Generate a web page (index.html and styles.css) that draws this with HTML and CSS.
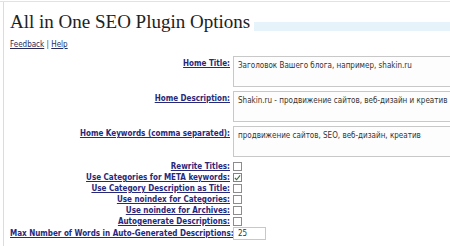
FILE: index.html
```html
<!DOCTYPE html>
<html lang="ru">
<head>
    <meta charset="UTF-8">
    <title>All in One SEO Plugin Options</title>
    <link rel="stylesheet" href="styles.css">
</head>
<body>
    <div class="topline"></div>
    <div class="wrap">
        <h1 class="title">All in One SEO Plugin Options</h1>
        <p class="links"><a href="#">Feedback</a> | <a href="#">Help</a></p>

        <div class="form">
            <a class="label tall" href="#">Home Title:</a>
            <div class="field"><div class="area">Заголовок Вашего блога, например, shakin.ru</div></div>

            <a class="label tall" href="#">Home Description:</a>
            <div class="field"><div class="area">Shakin.ru - продвижение сайтов, веб-дизайн и креатив</div></div>

            <a class="label tall" href="#">Home Keywords (comma separated):</a>
            <div class="field"><div class="area">продвижение сайтов, SEO, веб-дизайн, креатив</div></div>

            <a class="label" href="#">Rewrite Titles:</a>
            <div class="field"><span class="box"></span></div>

            <a class="label" href="#">Use Categories for META keywords:</a>
            <div class="field"><span class="box checked"><svg width="8" height="8" viewBox="0 0 8 8"><path d="M1 4 L3 6 L7 1" fill="none" stroke="#3d6b3d" stroke-width="1.3"/></svg></span></div>

            <a class="label" href="#">Use Category Description as Title:</a>
            <div class="field"><span class="box"></span></div>

            <a class="label" href="#">Use noindex for Categories:</a>
            <div class="field"><span class="box"></span></div>

            <a class="label" href="#">Use noindex for Archives:</a>
            <div class="field"><span class="box"></span></div>

            <a class="label" href="#">Autogenerate Descriptions:</a>
            <div class="field"><span class="box"></span></div>

            <a class="label num" href="#">Max Number of Words in Auto-Generated Descriptions:</a>
            <div class="field"><span class="input">25</span></div>
        </div>
    </div>
</body>
</html>
```

FILE: styles.css
```css
body {
    margin: 0;
    background: #fff;
    font-family: "DejaVu Sans Condensed", "DejaVu Sans", sans-serif;
    font-size: 8px;
    overflow: hidden;
}

.topline {
    height: 1px;
    margin-top: 1px;
    background: #e2e2e2;
}

.wrap {
    margin-left: 3px;
    border-left: 1px solid #dcdcdc;
    padding-left: 6px;
    min-height: 250px;
}

.title {
    display: flex;
    align-items: flex-start;
    margin: 0;
    padding-top: 8px;
    font-family: "Liberation Serif", serif;
    font-size: 19px;
    font-weight: normal;
    line-height: 24px;
    color: #222;
}

.title::after {
    content: '';
    flex: 1;
    height: 9px;
    margin-top: 12px;
    margin-left: 4px;
    background: #e6f3fb;
}

.links {
    margin: 5px 0 0;
    line-height: 11px;
    color: #333;
}

.links a {
    color: #2a2a5a;
}

.form {
    display: grid;
    grid-template-columns: 220px 1fr;
    column-gap: 3px;
    margin-top: 6px;
}

.label {
    text-align: right;
    font-weight: bold;
    line-height: 11px;
    color: #28287a;
    white-space: nowrap;
}

.label.tall {
    padding-top: 2px;
}

.label.num {
    padding-top: 1px;
}

.field {
    display: flex;
    align-items: center;
    height: 11px;
}

.label.tall + .field {
    height: auto;
}

.area {
    width: 300px;
    height: 26px;
    margin-bottom: 4px;
    padding: 3px 4px 0;
    border: 1px solid #c8c8c8;
    line-height: 11px;
    color: #333;
    background: #fdfdfd;
}

.box {
    display: flex;
    align-items: center;
    justify-content: center;
    width: 7px;
    height: 7px;
    border: 1px solid #8c8c8c;
    background: #fff;
}

.box.checked {
    border-color: #7a8a7a;
}

.field:has(.input) {
    height: 13px;
}

.input {
    width: 27px;
    height: 11px;
    padding-left: 4px;
    border: 1px solid #c8c8c8;
    line-height: 11px;
    color: #333;
}
```
